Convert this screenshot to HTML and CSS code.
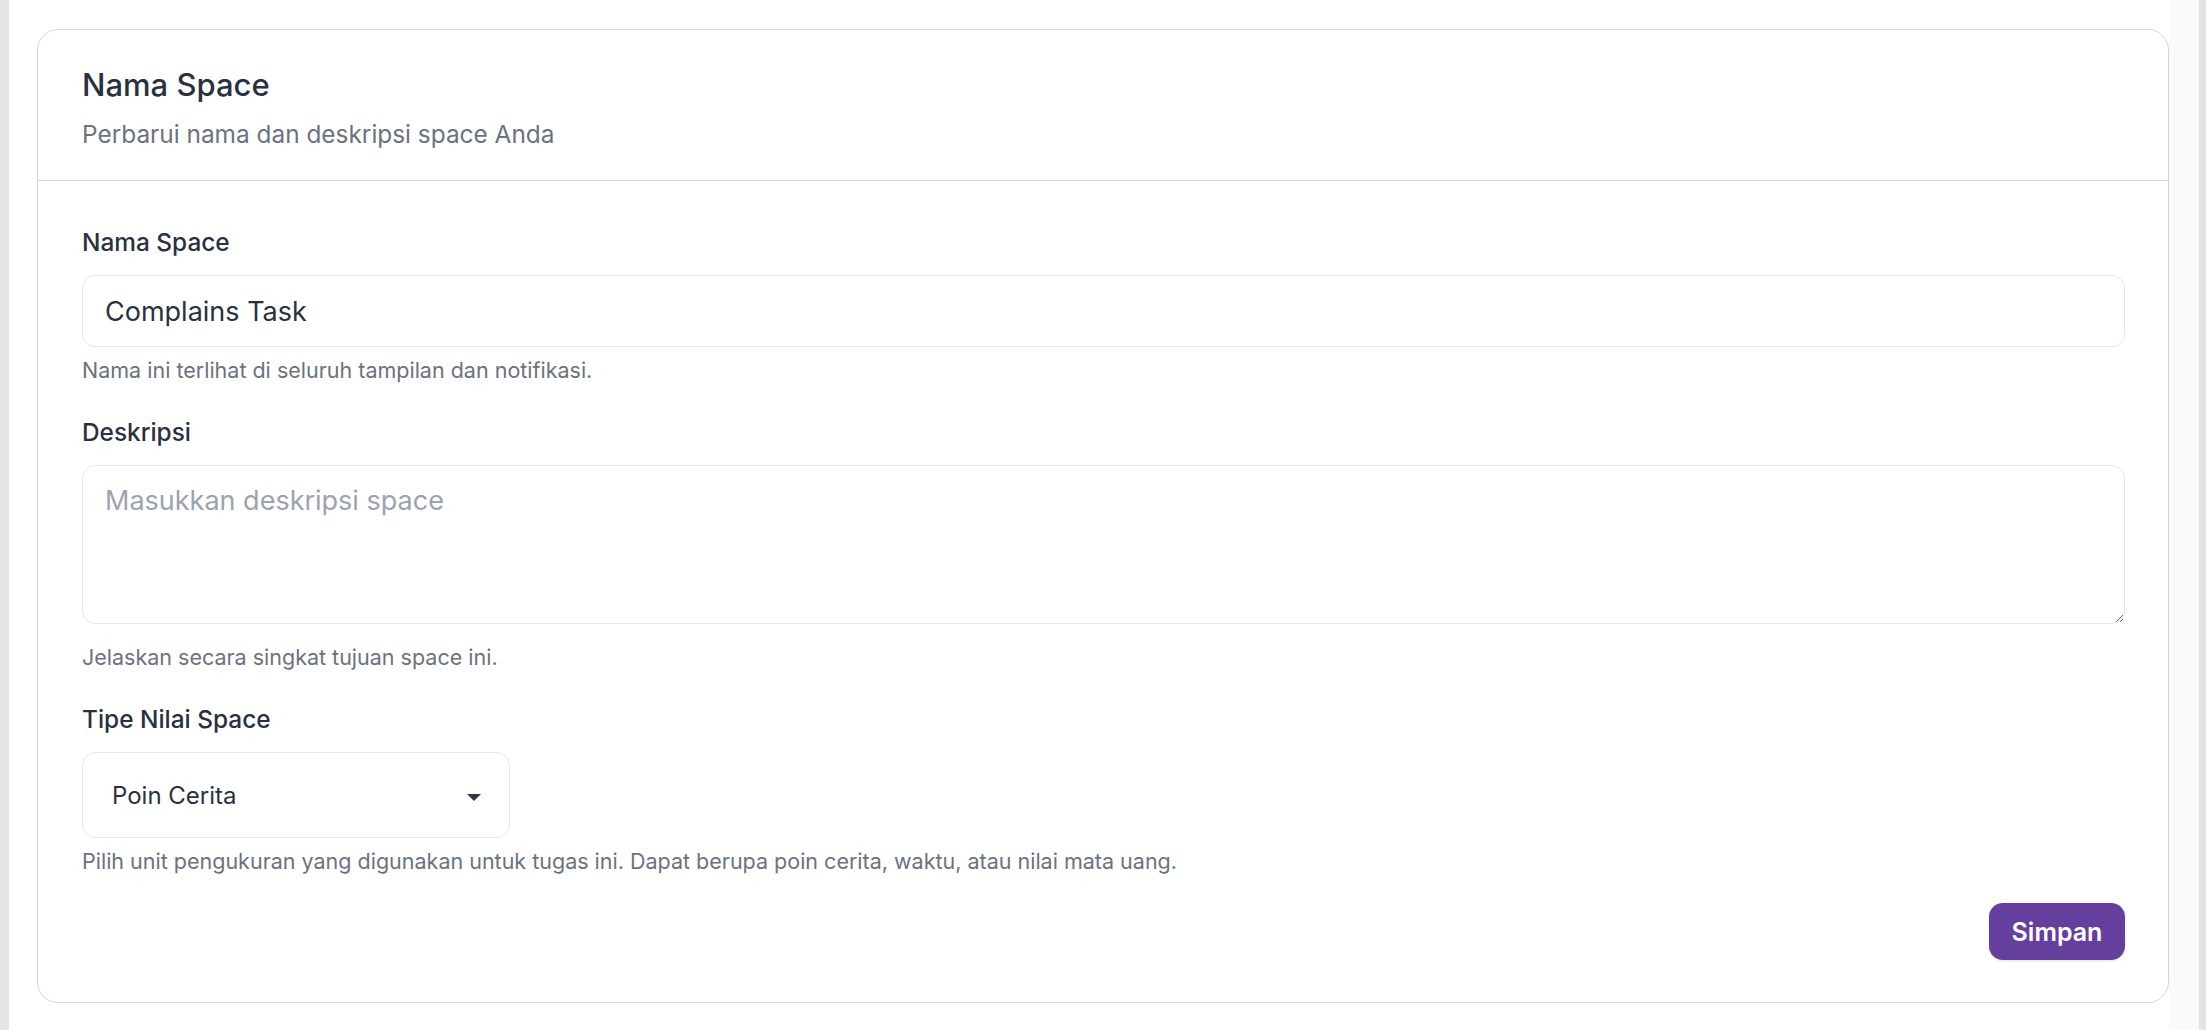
FILE: index.html
```html
<!DOCTYPE html>
<html lang="id">
<head>
  <meta charset="UTF-8" />
  <title>Pengaturan Space</title>
  <link rel="stylesheet" href="styles.css">
</head>
<body>
  <div class="page">
    <div class="side-edge"></div>

    <main class="main">
      <form class="card">
        <div class="card-header">
          <h2 class="card-title">Nama Space</h2>
          <p class="card-desc">Perbarui nama dan deskripsi space Anda</p>
        </div>

        <div class="card-body">
          <div class="field">
            <label class="field-label" for="space-name">Nama Space</label>
            <input class="text-input" id="space-name" type="text" value="Complains Task" />
            <p class="field-help">Nama ini terlihat di seluruh tampilan dan notifikasi.</p>
          </div>

          <div class="field">
            <label class="field-label" for="space-desc">Deskripsi</label>
            <textarea class="text-area" id="space-desc" placeholder="Masukkan deskripsi space"></textarea>
            <p class="field-help help-after-area">Jelaskan secara singkat tujuan space ini.</p>
          </div>

          <div class="field">
            <label class="field-label" for="space-type">Tipe Nilai Space</label>
            <div class="select-wrap">
              <select class="select" id="space-type">
                <option>Poin Cerita</option>
                <option>Waktu</option>
                <option>Nilai Mata Uang</option>
              </select>
              <svg class="select-arrow" width="14" height="7" viewBox="0 0 14 7">
                <path d="M0 0 H14 L7 7 Z" fill="#2f3746" />
              </svg>
            </div>
            <p class="field-help">Pilih unit pengukuran yang digunakan untuk tugas ini. Dapat berupa poin cerita, waktu, atau nilai mata uang.</p>
          </div>

          <div class="actions">
            <button class="save-btn" type="button">Simpan</button>
          </div>
        </div>
      </form>
    </main>

    <div class="scroll-track"></div>
  </div>
</body>
</html>
```

FILE: styles.css
```css
* {
  box-sizing: border-box;
}
body {
  margin: 0;
  font-family: Inter, "Noto Sans", Arial, sans-serif;
  background: #fff;
  color: #283141;
}
.page {
  display: flex;
  height: 1030px;
}
.side-edge {
  width: 9px;
  background: #e6e6e6;
}
.main {
  flex: 1;
  padding: 29px 0 27px 28px;
}
.scroll-track {
  width: 37px;
  background: #fafafa;
  border-right: 7px solid #e3e3e3;
}
.card {
  height: 974px;
  background: #fff;
  border: 1px solid #d6d6d6;
  border-radius: 21px;
}
.card-header {
  padding: 36px 44px 30px;
  border-bottom: 1px solid #d6d6d6;
}
.card-title {
  margin: 0;
  font-size: 31px;
  line-height: 38px;
  font-weight: 500;
  color: #283141;
}
.card-desc {
  margin: 14px 0 0;
  font-size: 24.4px;
  line-height: 32px;
  color: #6b7280;
}
.card-body {
  padding: 45px 43px 0 44px;
}
.field {
  margin-bottom: 31px;
}
.field-label {
  display: block;
  font-size: 24.4px;
  line-height: 32px;
  font-weight: 500;
  color: #283141;
  margin-bottom: 17px;
}
.text-input,
.text-area,
.select {
  display: block;
  width: 100%;
  font-family: inherit;
  color: #283141;
  background: #fff;
  border: 1px solid #e5e7eb;
  outline: none;
}
.text-input {
  height: 72px;
  padding: 0 22px;
  font-size: 27px;
  border-radius: 13px;
}
.text-area {
  height: 159px;
  padding: 15px 22px;
  font-size: 27px;
  line-height: 40px;
  border-radius: 13px;
  resize: vertical;
}
.text-area::placeholder {
  color: #9ca3af;
}
.field-help {
  margin: 8px 0 0;
  font-size: 21.5px;
  line-height: 30px;
  color: #6b7280;
}
.help-after-area {
  margin-top: 18px;
}
.select-wrap {
  position: relative;
  width: 428px;
}
.select {
  height: 86px;
  padding: 0 60px 0 29px;
  font-size: 24px;
  border-radius: 14px;
  appearance: none;
  -webkit-appearance: none;
}
.select-arrow {
  position: absolute;
  right: 29px;
  top: 42px;
}
.actions {
  display: flex;
  justify-content: flex-end;
  margin-top: -4px;
}
.save-btn {
  width: 136px;
  height: 57px;
  background: #643f9e;
  color: #fff;
  font-family: inherit;
  font-size: 25px;
  font-weight: 600;
  border: none;
  border-radius: 14px;
  box-shadow: 0 1px 3px rgba(0, 0, 0, 0.12);
  cursor: pointer;
}
```
